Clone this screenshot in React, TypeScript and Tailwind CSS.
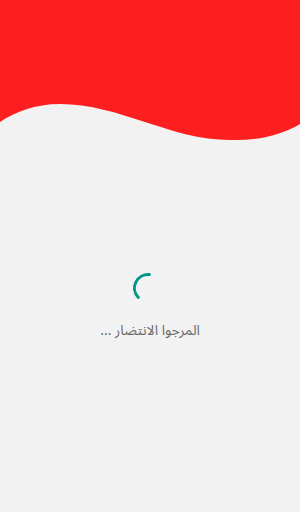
export default function App() {
  return (
    <div className="w-[300px] h-[512px] bg-[#f2f2f2] overflow-hidden">
      <svg
        className="block w-[300px] h-[142px]"
        viewBox="0 0 300 142"
        preserveAspectRatio="none"
      >
        <path
          d="M0 0 H300 V124 C280 136 255 141 230 140 C170 140 120 104 60 104 C35 104 15 112 0 122 Z"
          fill="#fd1f1f"
        />
      </svg>
      <div className="flex flex-col items-center pt-[131px]">
        <svg className="w-[30px] h-[30px] mr-[4px]" viewBox="0 0 30 30">
          <path
            d="M16.4 1.6 A13.5 13.5 0 0 0 5.2 24.3"
            fill="none"
            stroke="#009688"
            strokeWidth="3"
            strokeLinecap="round"
          />
        </svg>
        <p
          dir="rtl"
          className="mt-[18px] text-[14px] leading-[20px] text-[#6b6b6b]"
          style={{ fontFamily: '"Noto Sans Arabic", "DejaVu Sans", sans-serif' }}
        >
          المرجوا الانتضار ...
        </p>
      </div>
    </div>
  )
}
